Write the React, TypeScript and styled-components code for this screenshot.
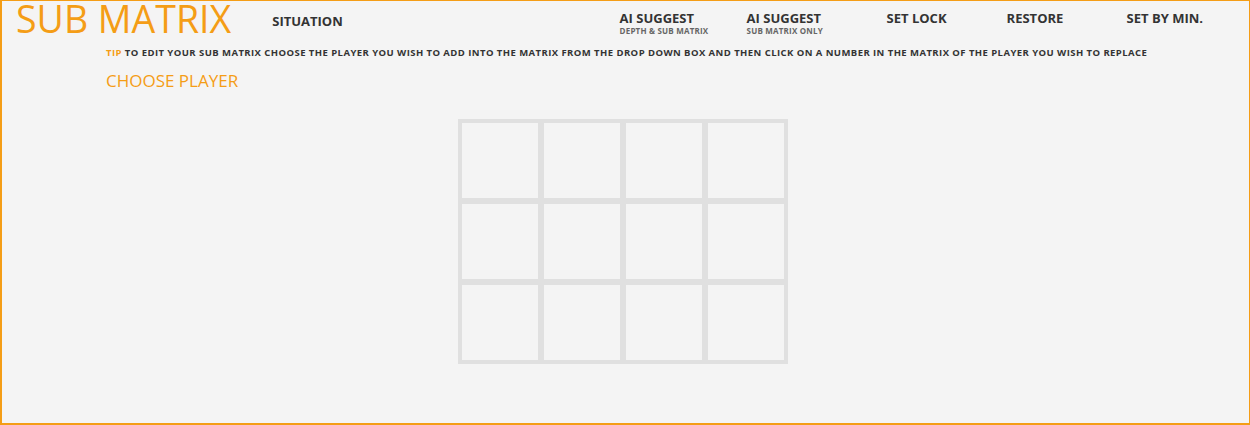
import React from 'react'
import styled, { createGlobalStyle } from 'styled-components'

const ORANGE = '#f49d16'

const GlobalStyle = createGlobalStyle`
  html, body {
    margin: 0;
    padding: 0;
    background: #f4f4f4;
  }
  * {
    box-sizing: border-box;
  }
`

type NavEntry = { label: string; sub?: string; width?: number }

const navEntries: NavEntry[] = [
  { label: 'AI SUGGEST', sub: 'DEPTH & SUB MATRIX', width: 127 },
  { label: 'AI SUGGEST', sub: 'SUB MATRIX ONLY', width: 140 },
  { label: 'SET LOCK', width: 120 },
  { label: 'RESTORE', width: 120 },
  { label: 'SET BY MIN.' },
]

const App: React.FC = () => {
  return (
    <>
      <GlobalStyle />
      <Panel>
        <Header>
          <Title>SUB MATRIX</Title>
          <Situation href="#">SITUATION</Situation>
          <Nav>
            {navEntries.map((item, i) => (
              <NavItem key={i} $width={item.width}>
                <NavLabel>{item.label}</NavLabel>
                {item.sub && <NavSub>{item.sub}</NavSub>}
              </NavItem>
            ))}
          </Nav>
        </Header>
        <Tip>
          <TipMark>TIP</TipMark> TO EDIT YOUR SUB MATRIX CHOOSE THE PLAYER YOU WISH TO ADD INTO THE
          MATRIX FROM THE DROP DOWN BOX AND THEN CLICK ON A NUMBER IN THE MATRIX OF THE PLAYER YOU
          WISH TO REPLACE
        </Tip>
        <ChoosePlayer>CHOOSE PLAYER</ChoosePlayer>
        <MatrixRow>
          <Matrix>
            {Array.from({ length: 12 }).map((_, i) => (
              <Cell key={i} />
            ))}
          </Matrix>
        </MatrixRow>
      </Panel>
    </>
  )
}

const Panel = styled.div`
  width: 1250px;
  height: 425px;
  background: #f4f4f4;
  border-style: solid;
  border-color: ${ORANGE};
  border-width: 1px 1px 2px 2px;
  font-family: 'Open Sans', 'Liberation Sans', sans-serif;
  color: #333;
`
const Header = styled.div`
  height: 46px;
  display: flex;
  flex-direction: row;
  align-items: flex-start;
  padding-left: 14px;
  padding-right: 46px;
`
const Title = styled.h1`
  margin: -2px 0 0;
  font-size: 37.5px;
  line-height: 40px;
  font-weight: 400;
  color: ${ORANGE};
  white-space: nowrap;
`
const Situation = styled.a`
  margin: 12px 0 0 41px;
  font-size: 13px;
  line-height: 16px;
  font-weight: 700;
  color: #333;
  text-decoration: none;
`
const Nav = styled.nav`
  margin-left: auto;
  margin-top: 9px;
  display: flex;
  flex-direction: row;
`
const NavItem = styled.div<{ $width?: number }>`
  width: ${(p) => (p.$width ? `${p.$width}px` : 'auto')};
  display: flex;
  flex-direction: column;
`
const NavLabel = styled.span`
  font-size: 13px;
  line-height: 16px;
  font-weight: 700;
  color: #333;
  white-space: nowrap;
`
const NavSub = styled.span`
  font-size: 8px;
  line-height: 9px;
  font-weight: 700;
  color: #666;
  letter-spacing: 0.2px;
  white-space: nowrap;
`
const Tip = styled.p`
  margin: 0;
  padding-left: 104px;
  font-size: 9.5px;
  line-height: 12px;
  font-weight: 700;
  letter-spacing: 0.44px;
  color: #333;
  white-space: nowrap;
`
const TipMark = styled.span`
  color: ${ORANGE};
`
const ChoosePlayer = styled.h2`
  margin: 12px 0 0;
  padding-left: 104px;
  font-size: 17px;
  line-height: 20px;
  font-weight: 400;
  color: ${ORANGE};
`
const MatrixRow = styled.div`
  margin-top: 28px;
  display: flex;
  justify-content: center;
  padding-right: 5px;
`
const Matrix = styled.div`
  display: grid;
  grid-template-columns: repeat(4, 76px);
  grid-auto-rows: 75px;
  gap: 6px;
  padding: 4px;
  background: #e0e0e0;
`
const Cell = styled.div`
  background: #f4f4f4;
`

export default App
